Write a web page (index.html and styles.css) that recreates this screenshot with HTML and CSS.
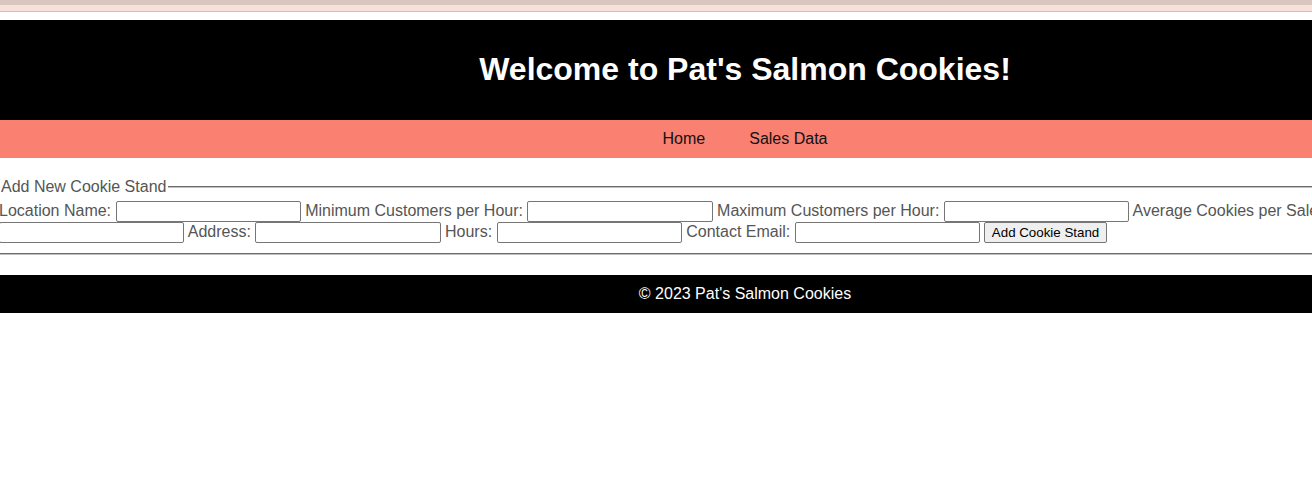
FILE: index.html
```html
<!DOCTYPE html>
<html lang="en">
<head>
<meta charset="utf-8">
<title>Pat's Salmon Cookies</title>
<link rel="stylesheet" href="styles.css">
</head>
<body>
<div class="page">
  <div class="topbar">
    <div class="band-a"></div>
    <div class="band-b"></div>
  </div>
  <header class="site-header">
    <h1>Welcome to Pat's Salmon Cookies!</h1>
  </header>
  <nav class="site-nav">
    <a href="#">Home</a>
    <a href="#">Sales Data</a>
  </nav>
  <main>
    <form class="stand-form">
      <fieldset>
        <legend>Add New Cookie Stand</legend>
        <label>Location Name: <input type="text"></label>
        <label>Minimum Customers per Hour: <input type="text"></label>
        <label>Maximum Customers per Hour: <input type="text"></label>
        <label>Average Cookies per Sale: <input type="text"></label>
        <label>Address: <input type="text"></label>
        <label>Hours: <input type="text"></label>
        <label>Contact Email: <input type="text"></label>
        <button type="button">Add Cookie Stand</button>
      </fieldset>
    </form>
  </main>
  <footer class="site-footer">© 2023 Pat's Salmon Cookies</footer>
</div>
</body>
</html>
```

FILE: styles.css
```css
html, body {
  margin: 0;
  padding: 0;
  overflow-x: hidden;
  background: #fff;
}

.page {
  width: 1490px;
  font-family: "Liberation Sans", Arial, sans-serif;
  font-size: 16px;
}

.topbar {
  margin-bottom: 8px;
}

.band-a {
  height: 5px;
  background: #d9c6bf;
}

.band-b {
  height: 6px;
  background: #f7e1da;
  border-bottom: 1px solid #d3bdb5;
}

.site-header {
  height: 100px;
  background: #000;
  display: flex;
  align-items: center;
  justify-content: center;
}

.site-header h1 {
  margin: 0 0 2px;
  color: #fff;
  font-size: 32px;
  font-weight: bold;
}

.site-nav {
  background: #fa8072;
  display: flex;
  justify-content: center;
  gap: 44px;
  padding: 10px 0;
  line-height: 18px;
}

.site-nav a {
  color: #111;
  text-decoration: none;
}

.stand-form {
  margin: 0;
}

.stand-form fieldset {
  margin: 20px 0 20px -3px;
  padding: 5px 0 10px 0;
  border: 2px groove rgb(192, 192, 192);
  color: #555;
  line-height: 18px;
}

.stand-form legend {
  padding: 0 2px;
  color: #555;
}

.stand-form input {
  box-sizing: border-box;
  width: 185.2px;
  height: 21px;
  font: 13.333px "Liberation Sans", Arial, sans-serif;
  padding: 1px 2px;
  border: 1px solid #767676;
  border-radius: 2px;
  vertical-align: baseline;
}

.stand-form button {
  box-sizing: border-box;
  height: 21px;
  font: 13.333px "Liberation Sans", Arial, sans-serif;
  padding: 1px 6.5px;
  border: 1px solid #767676;
  border-radius: 2px;
  background: #efefef;
  color: #000;
}

.site-footer {
  background: #000;
  color: #fff;
  text-align: center;
  padding: 10px 0;
  line-height: 18px;
}
```
